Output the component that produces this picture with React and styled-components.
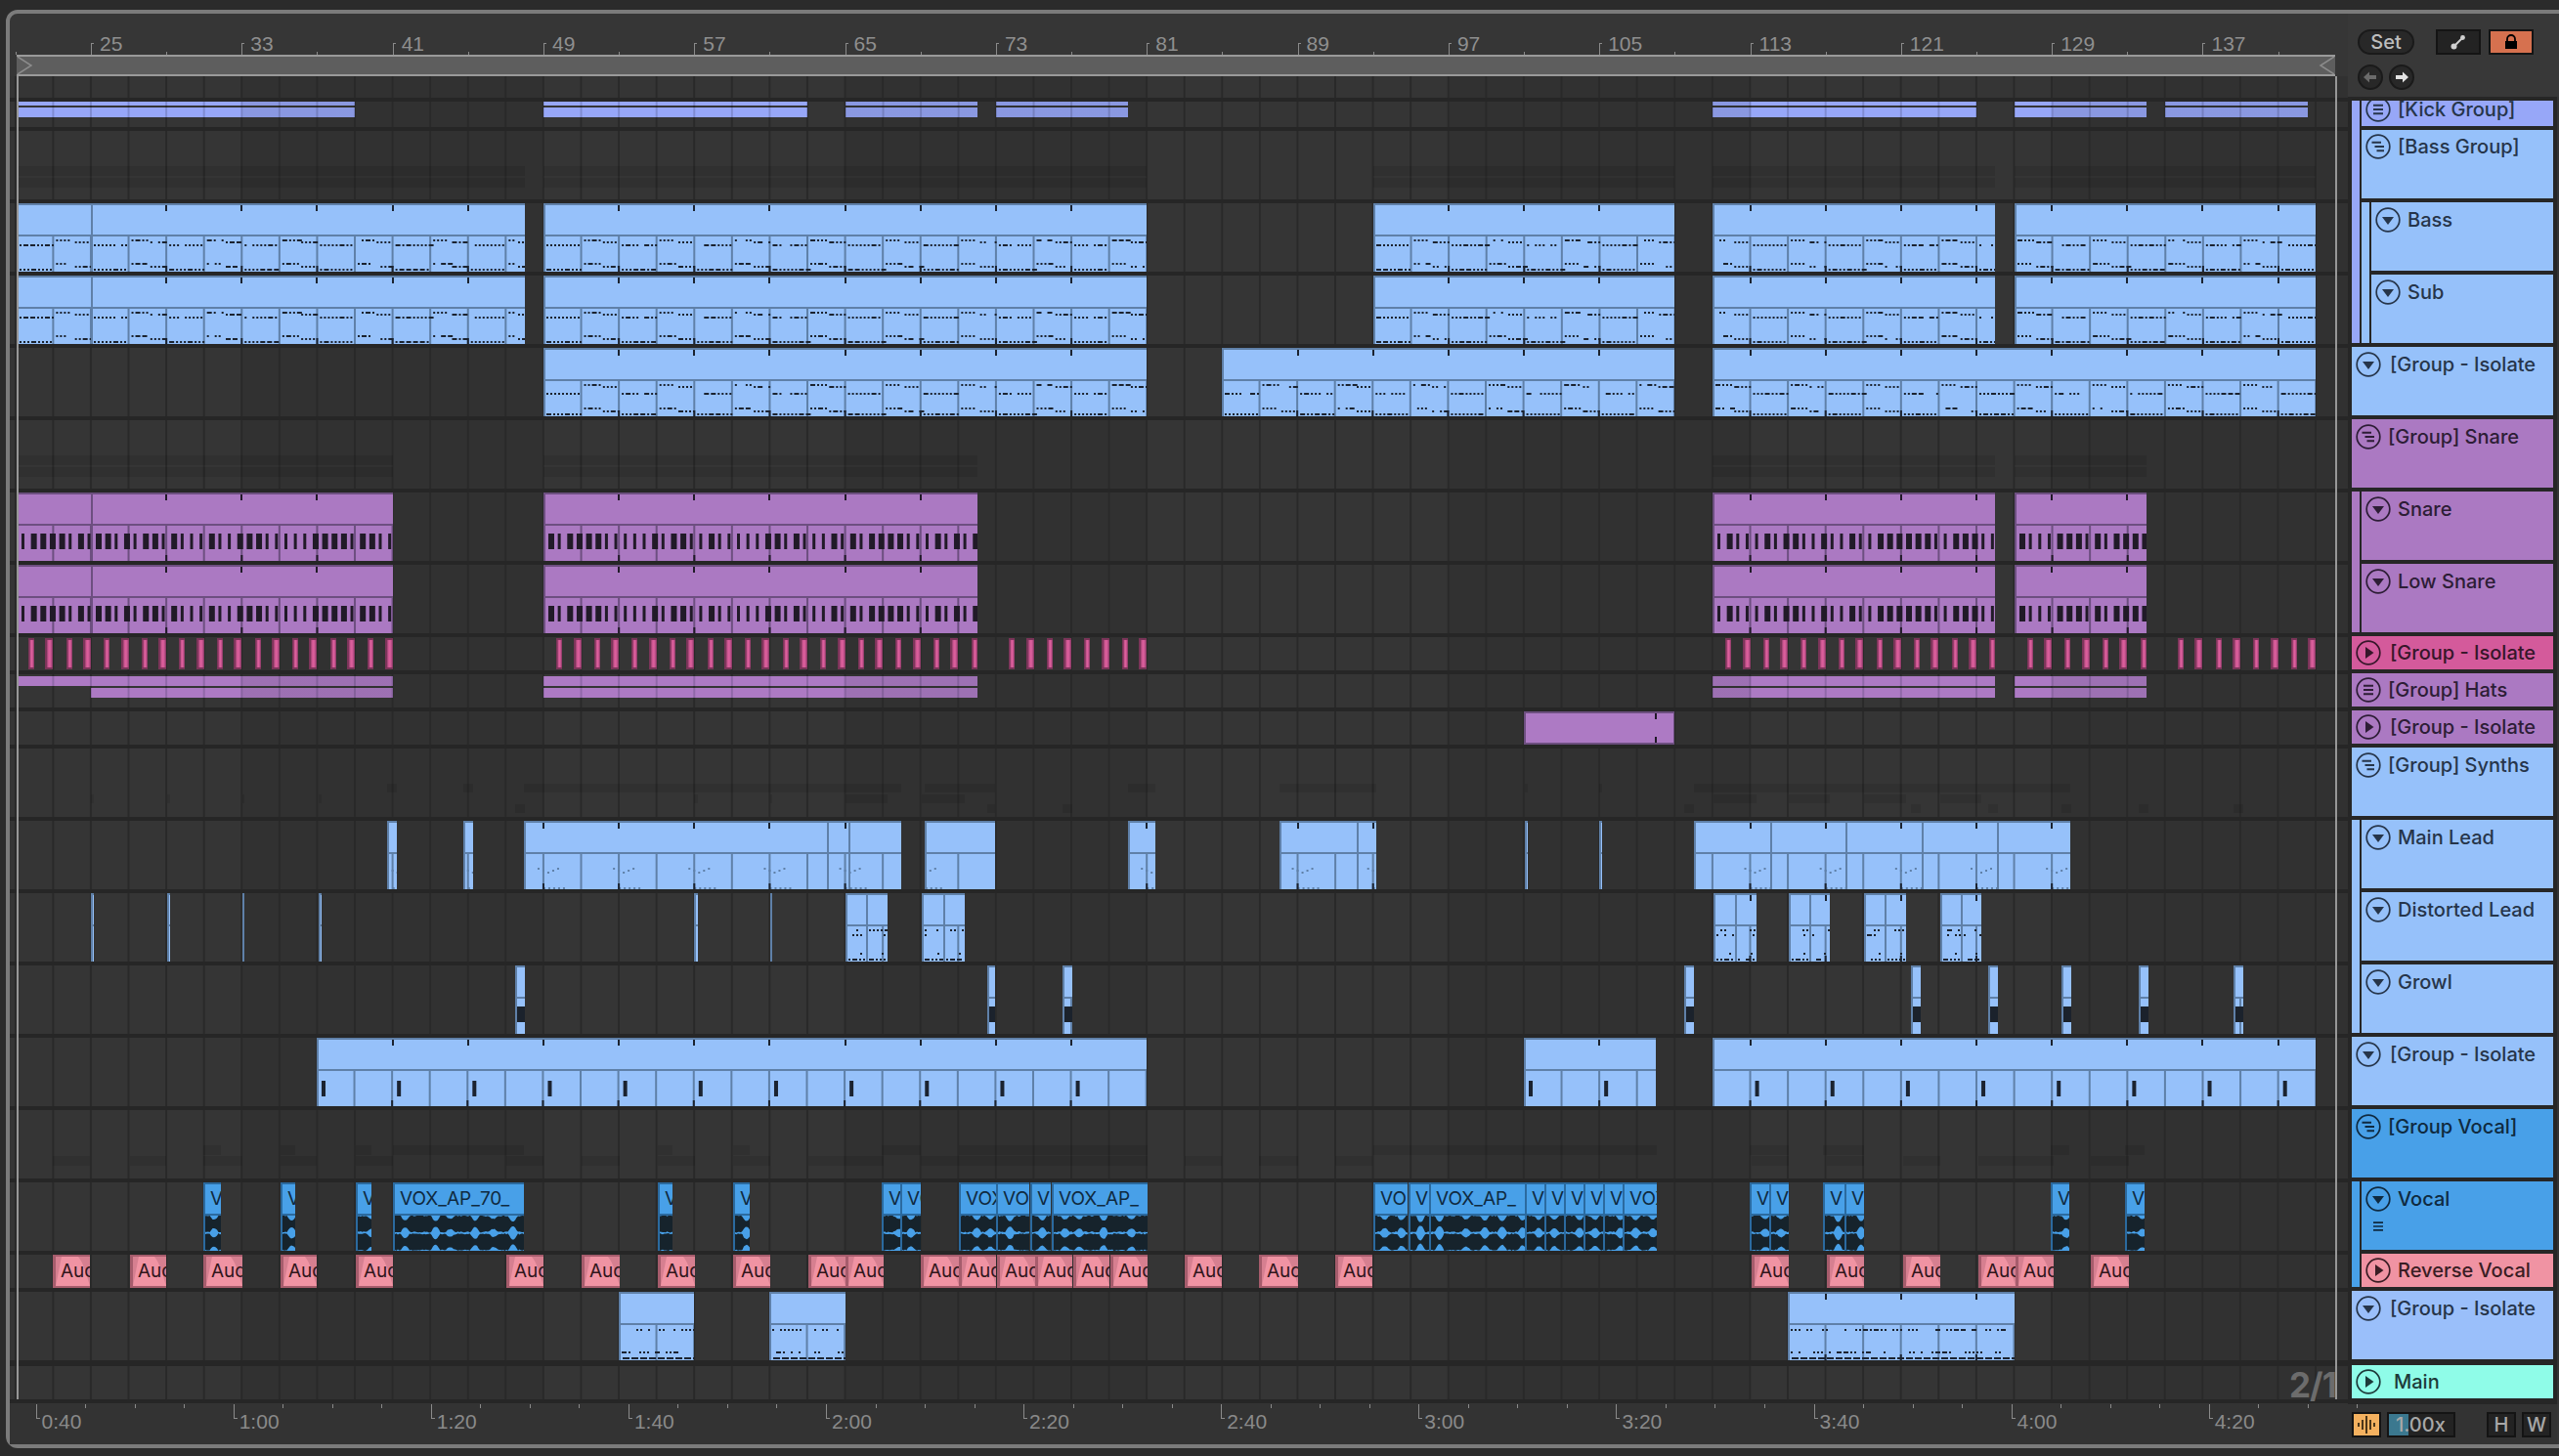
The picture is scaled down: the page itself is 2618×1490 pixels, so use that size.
import React from "react";
import styled, { createGlobalStyle } from "styled-components";

const LEFT = 10; // inner edge of the frame, all the x values below are page px
const b = (bar) => 93 + (bar - 25) * 19.29;
const GRID0 = 15.8;
const GRID = 38.58;
const BAND = 32 * 19.29; // darker 16 bars in every 32
const SANS = '"Inter", "Noto Sans", sans-serif';
const RULER = '"Liberation Sans", Arial, sans-serif';

const BLUE = { bg: "#96c1fa", line: "#5f80a8", note: "#1b2330", dim: "#5f80a8" };
const PURPLE = { bg: "#ab79c2", line: "#6d4f80", note: "#211a28", dim: "#6d4f80" };
const VOX = { bg: "#48a0e8", line: "#2b6a9f", note: "#16232c", dim: "#2b6a9f" };

const GlobalStyle = createGlobalStyle`
  html, body { margin: 0; padding: 0; width: 2618px; height: 1490px; overflow: hidden; background: #2b2b2b; }
`;

const rng = (seed) => {
  let s = Math.floor(seed * 7) + 11;
  return () => {
    s = (s * 9301 + 49297) % 233280;
    return s / 233280;
  };
};

const bassClips = [[17, b(25)], [b(25), b(48)], [b(49), b(81)], [b(93), b(109)], [b(111), b(126)], [b(127), b(143)]];
const isoBassClips = [[b(49), b(81)], [b(85), b(109)], [b(111), b(143)]];
const snareClips = [[17, b(25)], [b(25), b(41)], [b(49), b(72)], [b(111), b(126)], [b(127), b(134)]];
const leadClips = [[396, 406], [474, 484], [536, 846], [846, 868], [868, 922], [946, 1018], [1154, 1182], [1309, 1388], [1388, 1408], [1560, 1563], [1636, 1639], [1733, 1811], [1811, 1888], [1888, 1966], [1966, 2043], [2043, 2118]];
const distClips = [[93, 96], [171, 174], [248, 250], [326, 329], [710, 714], [788, 790], [865, 886], [886, 908], [943, 965], [965, 987], [1753, 1775], [1775, 1797], [1830, 1851], [1851, 1872], [1907, 1928], [1928, 1950], [1985, 2006], [2006, 2027]];
const growlClips = [[527, 537], [1010, 1018], [1087, 1097], [1723, 1733], [1955, 1965], [2034, 2044], [2109, 2119], [2188, 2198], [2285, 2295]];
const isoSynthClips = [[b(37), b(81)], [b(101), b(108)], [b(111), b(143)]];
const lowClips = [[b(53), b(57)], [b(61), b(65)], [b(115), b(127)]];

const voxClips = [
  [208, 226, "V"], [287, 302, "V"], [364, 380, "V"], [402, 536, "VOX_AP_70_"], [673, 688, "V"], [750, 767, "V"],
  [902, 921, "V"], [921, 942, "VO"], [981, 1019, "VOX"], [1019, 1053, "VO"], [1054, 1075, "V"], [1076, 1174, "VOX_AP_"],
  [1405, 1440, "VO"], [1441, 1462, "V"], [1462, 1560, "VOX_AP_"], [1560, 1580, "V"], [1580, 1600, "V"], [1600, 1620, "V"],
  [1620, 1640, "V"], [1640, 1660, "V"], [1660, 1695, "VOX"], [1790, 1810, "V"], [1810, 1830, "V"], [1865, 1887, "V"],
  [1887, 1907, "V"], [2098, 2117, "V"], [2174, 2194, "V"],
];
const revClips = [
  [54, 92], [133, 170], [208, 248], [287, 324], [364, 402], [518, 556], [595, 634], [673, 711], [750, 788], [827, 865],
  [865, 904], [942, 981], [981, 1019], [1020, 1059], [1059, 1097], [1098, 1135], [1136, 1174], [1212, 1250], [1288, 1328],
  [1366, 1404], [1792, 1830], [1869, 1907], [1947, 1985], [2024, 2062], [2062, 2101], [2139, 2178],
];

const pinkRanges = [[22, 41], [50, 72], [74, 81], [112, 126], [128, 134], [136, 143]];

const merge = (clips) => {
  const out = [];
  clips.forEach(([a, z]) => {
    const last = out[out.length - 1];
    if (last && a - last[1] < 3) last[1] = z;
    else out.push([a, z]);
  });
  return out;
};

const Frame = styled.div`
  position: absolute;
  top: 10px;
  left: 6px;
  width: 2620px;
  height: 1464px;
  display: flex;
  background: #363636;
  border: 4px solid #7b7b7b;
  border-radius: 12px 0 0 12px;
`;

const Arrangement = styled.div`
  width: 2392px;
  display: flex;
  flex-direction: column;
`;

const Ruler = styled.div`
  position: relative;
  height: 42px;
`;

const BarTick = styled.div.attrs((p) => ({ style: { left: p.$x - LEFT } }))`
  position: absolute;
  bottom: 0;
  width: 1px;
  height: ${(p) => (p.$major ? 12 : 3)}px;
  background: #8a8a8a;
  &::after {
    content: "";
    display: ${(p) => (p.$major ? "block" : "none")};
    width: 3px;
    height: 1px;
    background: #8a8a8a;
  }
`;

const BarLabel = styled.div.attrs((p) => ({ style: { left: p.$x - LEFT + 9 } }))`
  position: absolute;
  top: 19px;
  font: 21px/24px ${RULER};
  color: #8f8f8f;
`;

const LoopBar = styled.div`
  position: relative;
  height: 22px;
  box-sizing: border-box;
  margin: 0 13px 0 7px;
  background: #5e5e5e;
  border-top: 2px solid #9a9a9a;
  border-bottom: 2px solid #9a9a9a;
  display: flex;
  justify-content: space-between;
  svg { display: block; }
`;

const Lanes = styled.div`
  position: relative;
  display: flex;
  flex-direction: column;
  gap: 4px;
  height: 1358px;
  box-sizing: border-box;
  padding-bottom: 4px;
  background: #262626;
`;

const Lane = styled.div`
  position: relative;
  flex: 0 0 ${(p) => p.$h}px;
  margin-top: ${(p) => p.$mt || 0}px;
  overflow: hidden;
  background-color: #353535;
  background-image:
    linear-gradient(to right, #292929 2px, transparent 2px),
    linear-gradient(to right, rgba(0, 0, 0, 0.07) 50%, transparent 50%);
  background-size: ${GRID}px 100%, ${BAND}px 100%;
  background-position: ${GRID0 - LEFT - 1}px 0, ${b(33) - LEFT}px 0;
`;

const LoopEdge = styled.div.attrs((p) => ({ style: { left: p.$x - LEFT } }))`
  position: absolute;
  top: 0;
  bottom: 4px;
  width: 2px;
  background: #979797;
  z-index: 3;
`;

const Meter = styled.div`
  position: absolute;
  left: 2332px;
  top: 1319px;
  z-index: 2;
  font: 700 35px/40px ${SANS};
  letter-spacing: -1px;
  color: #6c6c6c;
`;

const ClipBox = styled.div.attrs((p) => ({ style: { left: p.$x - LEFT, width: p.$w } }))`
  position: absolute;
  top: 0;
  bottom: 0;
  box-sizing: border-box;
  display: flex;
  flex-direction: column;
  overflow: hidden;
  background: ${(p) => p.$c.bg};
  border-top: 2px solid ${(p) => p.$c.line};
  border-left: 2px solid ${(p) => p.$c.line};
`;

const ClipTitle = styled.div`
  position: relative;
  flex: 0 0 30px;
  box-sizing: content-box;
  overflow: hidden;
  border-bottom: 2px solid ${(p) => p.$c.line};
  font: 19px/30px ${SANS};
  color: #0f2a40;
  padding-left: 5px;
  white-space: nowrap;
`;

const TopTick = styled.i.attrs((p) => ({ style: { left: p.$x } }))`
  position: absolute;
  top: 0;
  width: 2px;
  height: 6px;
  background: ${(p) => p.$c.note};
`;

const ClipArt = styled.svg`
  display: block;
  flex: 0 0 36px;
`;

const gridInside = (x0, x1) => {
  const out = [];
  let k = Math.ceil((x0 + 1 - GRID0) / GRID);
  for (; GRID0 + k * GRID < x1; k++) out.push({ k, x: GRID0 + k * GRID - x0 });
  return out;
};

const fourBarTicks = (x0, x1) => {
  const out = [];
  for (let bar = 21; bar < 150; bar += 4) {
    const x = b(bar);
    if (x > x0 + 6 && x < x1 - 2) out.push(x - x0 - 3);
  }
  return out;
};

const dots = (r, x0, x1, y, color, thick = 2, keep = 0.9) => {
  const out = [];
  let x = x0 + 1;
  while (x < x1 - 3) {
    const w = r() > 0.8 ? 5 : 2;
    if (r() < keep) out.push(<rect key={`${x}-${y}`} x={x} y={y} width={w} height={thick} fill={color} />);
    x += w + 2;
  }
  return out;
};

const notesFor = (kind, x0, x1, c) => {
  const r = rng(x0 + x1);
  const w = x1 - x0;
  const cells = [{ k: Math.floor((x0 - GRID0) / GRID), x: 0 }, ...gridInside(x0, x1)];
  const out = [];
  if (kind === "bass" || kind === "iso") {
    cells.forEach(({ k, x }, i) => {
      const end = i + 1 < cells.length ? cells[i + 1].x : w;
      if (k % 2 === 0) {
        out.push(...dots(r, x, end, kind === "bass" ? 8 : 12, c.note));
        out.push(...dots(r, x, end, 33, c.note, 2, 1));
      } else {
        const mid = (x + end) / 2;
        out.push(...dots(r, x, mid, 3, c.note));
        out.push(...dots(r, mid, end, 5, c.note));
        out.push(...dots(r, x, mid, 27, c.note));
        out.push(...dots(r, mid, end, 30, c.note));
      }
    });
  }
  if (kind === "snare") {
    for (let x = 3; x < w - 1; x += 9.65) {
      const bw = r() > 0.5 ? 6 : 3;
      out.push(<rect key={x} x={x} y={8} width={Math.min(bw, w - x)} height={16} fill={c.note} />);
    }
  }
  if (kind === "lead") {
    for (let bar = 21; bar < 150; bar += 4) {
      const x = b(bar) - x0;
      if (x > -12 && x < w) {
        for (let i = 0; i < 5; i++) {
          const dx = x - 8 + i * 5;
          out.push(<rect key={`t${bar}-${i}`} x={dx} y={14 + (i < 3 ? i : 4 - i) * 2} width="2" height="2" fill={c.dim} />);
          out.push(<rect key={`u${bar}-${i}`} x={dx + 6} y={34} width="2" height="2" fill={c.dim} />);
        }
      }
    }
  }
  if (kind === "dist") {
    out.push(...dots(r, 0, w, 3, c.note, 2, 0.45));
    out.push(...dots(r, 0, w, 8, c.note, 2, 0.35));
    out.push(...dots(r, 0, w, 33, c.note, 2, 0.9));
    out.push(<rect key="n" x={w - 8} y={27} width="2" height="2" fill={c.note} />);
  }
  if (kind === "growl") {
    out.push(<rect key="g" x="0" y="8" width={w} height="16" fill="#1b222c" />);
  }
  if (kind === "isoSynth") {
    for (let bar = 21; bar < 150; bar += 4) {
      const x = b(bar) - x0 + 3;
      if (x > 0 && x < w) out.push(<rect key={bar} x={x} y={10} width="4" height="16" fill={c.note} />);
    }
  }
  if (kind === "low") {
    out.push(...dots(r, 0, w, 4, c.note, 2, 0.6));
    out.push(...dots(r, 0, w, 27, c.note, 2, 0.6));
    for (let x = 2; x < w - 2; x += 9) out.push(<rect key={`d${x}`} x={x} y={33} width="7" height="2" fill={c.note} />);
  }
  return out;
};

// the dips sit at uneven distances so the blobs don't look like a chain of beads
const waveDips = (w, seed) => {
  const r = rng(seed);
  const dips = [];
  let x = 8 + r() * 10;
  while (x < w) {
    dips.push({ x, depth: 0.35 + r() * 0.45 });
    x += 13 + r() * 24;
  }
  return dips;
};

const wavePath = (w, cy, dips, seed) => {
  const r = rng(seed);
  const top = [];
  const bottom = [];
  for (let x = 0; x <= w; x += 1.5) {
    let a = 7.6 + r() * 1.3;
    dips.forEach((d) => {
      const t = Math.abs(x - d.x) / 4.5;
      if (t < 1) a *= 1 - d.depth * (1 - t * t);
    });
    top.push(`${x},${(cy - a).toFixed(1)}`);
    bottom.unshift(`${x},${(cy + a).toFixed(1)}`);
  }
  return `M${top.join("L")}L${bottom.join("L")}Z`;
};

const Clip = ({ x0, x1, c, kind, h = 70 }) => {
  const w = x1 - x0;
  const ticks = fourBarTicks(x0, x1);
  return (
    <ClipBox $x={x0} $w={w} $c={c}>
      <ClipTitle $c={c}>
        {ticks.map((x) => <TopTick key={x} $x={x} $c={c} />)}
      </ClipTitle>
      <ClipArt width={w} height={h - 34}>
        {gridInside(x0, x1).map(({ x }) => <rect key={x} x={x - 3} y="0" width="2" height={h - 34} fill={c.line} />)}
        {notesFor(kind, x0, x1, c)}
        {ticks.map((x) => <rect key={x} x={x} y={h - 40} width="2" height="6" fill={c.note} />)}
      </ClipArt>
    </ClipBox>
  );
};

const VoxClip = ({ x0, x1, label }) => {
  const w = x1 - x0;
  const dips = waveDips(w, x0 + 5);
  return (
    <ClipBox $x={x0} $w={w} $c={VOX}>
      <ClipTitle $c={VOX}>{label}</ClipTitle>
      <ClipArt width={w} height="36">
        <path d={wavePath(w, 8.5, dips, x0 + 3)} fill={VOX.note} />
        <path d={wavePath(w, 27, dips, x0 + 9)} fill={VOX.note} />
      </ClipArt>
    </ClipBox>
  );
};

const RevBox = styled.div.attrs((p) => ({ style: { left: p.$x - LEFT, width: p.$w } }))`
  position: absolute;
  top: 0;
  bottom: 0;
  box-sizing: border-box;
  overflow: hidden;
  background: #f093a3;
  border: solid #a65c6c;
  border-width: 2px 0 2px 3px;
  font: 19px/30px ${SANS};
  color: #32161c;
  padding-left: 5px;
  white-space: nowrap;
  svg { position: absolute; left: 0; top: 0; }
  span { position: relative; }
`;

const RevClip = ({ x0, x1 }) => {
  const w = x1 - x0 - 3;
  return (
    <RevBox $x={x0} $w={x1 - x0}>
      <svg width={w} height="30">
        <path d={`M0 30L6 0H0Z M${w} 30C${w - 4} 16 ${w - 7} 6 ${w - 12} 0H${w}Z`} fill="#d67f90" />
      </svg>
      <span>Aud</span>
    </RevBox>
  );
};

const Ghost = styled.div.attrs((p) => ({ style: { left: p.$x - LEFT, width: p.$w } }))`
  position: absolute;
  top: ${(p) => p.$top}px;
  height: ${(p) => p.$h}px;
  background: rgba(0, 0, 0, 0.09);
`;

const Ghosts = ({ rows, h = 10, tops }) =>
  rows.map((clips, i) =>
    merge(clips).map(([a, z]) => <Ghost key={`${i}-${a}`} $x={a} $w={z - a} $top={tops[i]} $h={h} />),
  );

const Folded = styled.div.attrs((p) => ({ style: { left: p.$x - LEFT, width: p.$w } }))`
  position: absolute;
  top: ${(p) => p.$top}px;
  display: flex;
  flex-direction: column;
  gap: 2px;
`;

const FoldStrip = styled.div.attrs((p) => ({
  style: { backgroundPosition: `${p.$pos}px 0, ${p.$band}px 0`, marginLeft: p.$skip || 0 },
}))`
  height: ${(p) => p.$h}px;
  background-color: ${(p) => p.$bg};
  background-image:
    linear-gradient(to right, rgba(30, 30, 60, 0.2) 2px, transparent 2px),
    linear-gradient(to right, rgba(45, 45, 60, 0.12) 50%, transparent 50%);
  background-size: ${GRID}px 100%, ${BAND}px 100%;
`;

const FoldClip = ({ x0, x1, bg, top, h1, h2, skip = 0 }) => {
  const pos = (GRID0 - x0 - 1) % GRID;
  const band = b(33) - x0;
  return (
    <Folded $x={x0} $w={x1 - x0} $top={top}>
      <FoldStrip $h={h1} $bg={bg} $pos={pos} $band={band} />
      <FoldStrip $h={h2} $bg={bg} $pos={pos - skip} $band={band - skip} $skip={skip} />
    </Folded>
  );
};

const PinkBox = styled.div.attrs((p) => ({ style: { left: p.$x - LEFT, width: p.$w } }))`
  position: absolute;
  top: 1px;
  bottom: 1px;
  box-sizing: border-box;
  border-top: 2px solid #7b3459;
  border-bottom: 2px solid #7b3459;
  background: linear-gradient(to right, #7b3459 0 18%, #c9558f 40%, #e0619f 62%, #b54b84 84%, #7b3459 100%);
`;

const PlainClip = styled.div.attrs((p) => ({ style: { left: p.$x - LEFT, width: p.$w } }))`
  position: absolute;
  top: 0;
  bottom: 0;
  background: #ad7ac4;
  border: solid #6d4f80;
  border-width: 2px 1px 2px 2px;
  box-sizing: border-box;
  &::before,
  &::after {
    content: "";
    position: absolute;
    right: 17px;
    width: 2px;
    height: 6px;
    background: #211a28;
  }
  &::before { top: 0; }
  &::after { bottom: 0; }
`;

const FootRuler = styled.div`
  position: relative;
  height: 42px;
  background: #333333;
`;

const TimeTick = styled.div.attrs((p) => ({ style: { left: p.$x - LEFT } }))`
  position: absolute;
  top: 1px;
  width: 1px;
  height: ${(p) => (p.$major ? 15 : 4)}px;
  background: #8a8a8a;
  &::after {
    content: "";
    display: ${(p) => (p.$major ? "block" : "none")};
    position: absolute;
    bottom: 0;
    width: 4px;
    height: 1px;
    background: #8a8a8a;
  }
`;

const TimeLabel = styled.div.attrs((p) => ({ style: { left: p.$x - LEFT + 6 } }))`
  position: absolute;
  top: 7px;
  font: 21px/24px ${RULER};
  color: #8a8a8a;
`;

const Side = styled.div`
  width: 224px;
  display: flex;
  flex-direction: column;
`;

const Controls = styled.div`
  height: 86px;
  box-sizing: border-box;
  padding: 16px 0 0 10px;
  display: flex;
  flex-direction: column;
  gap: 10px;
  background: #383838;
`;

const ControlRow = styled.div`
  display: flex;
  align-items: center;
  gap: ${(p) => p.$gap}px;
`;

const SetButton = styled.div`
  width: 58px;
  height: 26px;
  box-sizing: border-box;
  border-radius: 13px;
  border: 2px solid #1a1a1a;
  background: #282828;
  color: #bdbdbd;
  font: 500 20px/22px ${SANS};
  text-align: center;
`;

const SquareButton = styled.div`
  width: ${(p) => p.$w || 46}px;
  height: 26px;
  margin-left: ${(p) => p.$ml || 0}px;
  box-sizing: border-box;
  border: 2px solid #141414;
  background: ${(p) => p.$bg || "#232323"};
  display: flex;
  align-items: center;
  justify-content: center;
`;

const RoundButton = styled.div`
  width: 26px;
  height: 26px;
  border-radius: 50%;
  box-sizing: border-box;
  border: 2px solid #1a1a1a;
  background: #282828;
  display: flex;
  align-items: center;
  justify-content: center;
`;

const Heads = styled.div`
  height: 1358px;
  box-sizing: border-box;
  padding: 4px 4px 4px 4px;
  width: 214px;
  display: flex;
  flex-direction: column;
  gap: 4px;
  background: #262626;
  box-shadow: 10px 0 0 #333333;
`;

const Head = styled.div`
  flex: 0 0 ${(p) => p.$h}px;
  box-sizing: border-box;
  overflow: hidden;
  margin-top: ${(p) => p.$mt || 0}px;
  padding: ${(p) => p.$pad ?? 5}px 0 0 4px;
  background: ${(p) => p.$bg};
  color: ${(p) => p.$fg};
  display: flex;
  flex-direction: column;
`;

const HeadTop = styled.div`
  display: flex;
  align-items: flex-start;
  gap: ${(p) => p.$gap}px;
  margin-top: ${(p) => p.$lift || 0}px;
`;

const HeadName = styled.div`
  font: 500 20px/24px ${SANS};
  padding-top: 1px;
  white-space: nowrap;
`;

const SmallLines = styled.svg`
  display: block;
  margin: 10px 0 0 8px;
`;

const TrackGroup = styled.div`
  display: flex;
  flex-direction: column;
  gap: 4px;
  padding-left: 10px;
  background: linear-gradient(to right, ${(p) => p.$bg} 8px, #262626 8px);
`;

const FootControls = styled.div`
  height: 42px;
  box-sizing: border-box;
  width: 214px;
  padding: 8px 2px 0 4px;
  display: flex;
  gap: 6px;
  background: #333333;
`;

const Tempo = styled.div`
  position: relative;
  width: 70px;
  height: 26px;
  box-sizing: border-box;
  border: 2px solid #141414;
  background: linear-gradient(to right, #3b788f 20px, #232323 20px);
  color: #a8a8a8;
  font: 500 20px/22px ${SANS};
  padding-left: 7px;
`;

const Key = styled(SquareButton)`
  color: #a8a8a8;
  font: 500 20px/22px ${SANS};
`;

const FoldIcon = ({ kind }) => (
  <svg width="26" height="26" viewBox="0 0 26 26" style={{ flex: "none", display: "block" }}>
    <circle cx="13" cy="13" r="11.8" fill="none" stroke="currentColor" strokeWidth="1.7" />
    {kind === "down" && <path d="M7 10H19L13 18Z" fill="currentColor" />}
    {kind === "right" && <path d="M10 7V19L18.5 13Z" fill="currentColor" />}
    {kind === "lines" && <path d="M8 8.7H18M8 13H18M8 17.3H18" stroke="currentColor" strokeWidth="1.9" />}
    {kind === "stagger" && <path d="M6.5 8.7H16M9.5 13H19M11.5 17.3H19" stroke="currentColor" strokeWidth="1.9" />}
  </svg>
);

const Track = ({ name, icon, h = 70, bg, fg = "#26354a", gap = 7, pad, mt, lift, children }) => (
  <Head $h={h} $bg={bg} $fg={fg} $pad={pad} $mt={mt}>
    <HeadTop $gap={gap} $lift={lift}>
      <FoldIcon kind={icon} />
      <HeadName>{name}</HeadName>
    </HeadTop>
    {children}
  </Head>
);

const barNumbers = [];
for (let n = 25; n <= 137; n += 8) barNumbers.push(n);
const minorBars = [21];
for (let n = 29; n <= 141; n += 8) minorBars.push(n);
const times = ["0:40", "1:00", "1:20", "1:40", "2:00", "2:20", "2:40", "3:00", "3:20", "3:40", "4:00", "4:20"];
const T0 = 36.6;
const TSTEP = 202.1;

const clipsOf = (clips, c, kind) => clips.map(([x0, x1]) => <Clip key={x0} x0={x0} x1={x1} c={c} kind={kind} />);

const pinks = [];
pinkRanges.forEach(([from, to]) => {
  for (let n = from; n <= to; n++) {
    const w = n % 2 ? 8 : 6;
    pinks.push([b(n) - w, w]);
  }
});

const KICK = "#97a7f8";

export default function App() {
  return (
    <>
      <GlobalStyle />
      <Frame>
        <Arrangement>
          <Ruler>
            {barNumbers.map((n) => (
              <React.Fragment key={n}>
                <BarTick $x={b(n)} $major />
                <BarLabel $x={b(n)}>{n}</BarLabel>
              </React.Fragment>
            ))}
            {minorBars.map((n) => <BarTick key={n} $x={b(n)} />)}
          </Ruler>
          <LoopBar>
            <svg width="18" height="18"><path d="M1 0L15 9L1 18" fill="none" stroke="#8c8c8c" strokeWidth="1.5" /></svg>
            <svg width="18" height="18"><path d="M17 0L3 9L17 18" fill="none" stroke="#8c8c8c" strokeWidth="1.5" /></svg>
          </LoopBar>
          <Lanes>
            <LoopEdge $x={16.5} />
            <LoopEdge $x={2388.5} />
            <Meter>2/1</Meter>
            <Lane $h={22} />
            <Lane $h={26}>
              <FoldClip x0={17} x1={b(39)} bg={KICK} top={0} h1={4} h2={10} />
              <FoldClip x0={b(49)} x1={b(63)} bg={KICK} top={0} h1={4} h2={10} />
              <FoldClip x0={b(65)} x1={b(72)} bg={KICK} top={0} h1={4} h2={10} />
              <FoldClip x0={b(73)} x1={b(80)} bg={KICK} top={0} h1={4} h2={10} />
              <FoldClip x0={b(111)} x1={b(125)} bg={KICK} top={0} h1={4} h2={10} />
              <FoldClip x0={b(127)} x1={b(134)} bg={KICK} top={0} h1={4} h2={10} />
              <FoldClip x0={b(135)} x1={2361} bg={KICK} top={0} h1={4} h2={10} />
            </Lane>
            <Lane $h={70}><Ghosts rows={[bassClips, bassClips]} tops={[36, 48]} /></Lane>
            <Lane $h={70}>{clipsOf(bassClips, BLUE, "bass")}</Lane>
            <Lane $h={70}>{clipsOf(bassClips, BLUE, "bass")}</Lane>
            <Lane $h={70}>{clipsOf(isoBassClips, BLUE, "iso")}</Lane>
            <Lane $h={70}><Ghosts rows={[snareClips, snareClips]} tops={[36, 48]} /></Lane>
            <Lane $h={70}>{clipsOf(snareClips, PURPLE, "snare")}</Lane>
            <Lane $h={70}>{clipsOf(snareClips, PURPLE, "snare")}</Lane>
            <Lane $h={34}>
              {pinks.map(([x, w]) => <PinkBox key={x} $x={x} $w={w} />)}
            </Lane>
            <Lane $h={34}>
              <FoldClip x0={17} x1={b(41)} bg="#ad7ac4" top={2} h1={10} h2={10} skip={b(25) - 17} />
              <FoldClip x0={b(49)} x1={b(72)} bg="#ad7ac4" top={2} h1={10} h2={10} />
              <FoldClip x0={b(111)} x1={b(126)} bg="#ad7ac4" top={2} h1={10} h2={10} />
              <FoldClip x0={b(127)} x1={b(134)} bg="#ad7ac4" top={2} h1={10} h2={10} />
            </Lane>
            <Lane $h={34}><PlainClip $x={b(101)} $w={b(109) - b(101)} /></Lane>
            <Lane $h={70}><Ghosts rows={[leadClips, distClips, growlClips]} tops={[36, 47, 57]} h={9} /></Lane>
            <Lane $h={70}>{clipsOf(leadClips, BLUE, "lead")}</Lane>
            <Lane $h={70}>{clipsOf(distClips, BLUE, "dist")}</Lane>
            <Lane $h={70}>{clipsOf(growlClips, BLUE, "growl")}</Lane>
            <Lane $h={70}>{clipsOf(isoSynthClips, BLUE, "isoSynth")}</Lane>
            <Lane $h={70}><Ghosts rows={[voxClips, revClips]} tops={[36, 47]} /></Lane>
            <Lane $h={70}>{voxClips.map(([x0, x1, t]) => <VoxClip key={x0} x0={x0} x1={x1} label={t} />)}</Lane>
            <Lane $h={34}>{revClips.map(([x0, x1]) => <RevClip key={x0} x0={x0} x1={x1} />)}</Lane>
            <Lane $h={70}>{clipsOf(lowClips, BLUE, "low")}</Lane>
            <Lane $h={34} $mt={2} />
          </Lanes>
          <FootRuler>
            {times.map((t, i) => (
              <React.Fragment key={t}>
                <TimeTick $x={T0 + i * TSTEP} $major />
                <TimeLabel $x={T0 + i * TSTEP}>{t}</TimeLabel>
                {[1, 2, 3].map((q) => <TimeTick key={q} $x={T0 + i * TSTEP + (q * TSTEP) / 4} />)}
              </React.Fragment>
            ))}
          </FootRuler>
        </Arrangement>
        <Side>
          <Controls>
            <ControlRow $gap={0}>
              <SetButton>Set</SetButton>
              <SquareButton $ml={22}>
                <svg width="16" height="16" viewBox="0 0 16 16"><path d="M3 13L13 3" stroke="#d0d0d0" strokeWidth="2" /><circle cx="3.5" cy="12.5" r="3" fill="#d0d0d0" /><circle cx="12.5" cy="3.5" r="2.4" fill="#d0d0d0" /></svg>
              </SquareButton>
              <SquareButton $ml={8} $bg="#d6714f">
                <svg width="16" height="16" viewBox="0 0 16 16"><path d="M4 7V5a4 4 0 0 1 8 0v2" fill="none" stroke="#000" strokeWidth="1.8" /><rect x="2" y="7" width="12" height="8" fill="#000" /></svg>
              </SquareButton>
            </ControlRow>
            <ControlRow $gap={6}>
              <RoundButton>
                <svg width="16" height="14" viewBox="0 0 16 14"><path d="M1 7L7 1.5V5H14V9H7V12.5Z" fill="#6b6b6b" /></svg>
              </RoundButton>
              <RoundButton>
                <svg width="16" height="14" viewBox="0 0 16 14"><path d="M15 7L9 1.5V5H2V9H9V12.5Z" fill="#e2e2e2" /></svg>
              </RoundButton>
            </ControlRow>
          </Controls>
          <Heads>
            <TrackGroup $bg={KICK}>
              <Track name="[Kick Group]" icon="lines" h={26} pad={0} lift={-4} bg={KICK} />
              <Track name="[Bass Group]" icon="stagger" bg="#96c1fa" pad={4} />
              <TrackGroup $bg="#96c1fa">
                <Track name="Bass" icon="down" bg="#96c1fa" />
                <Track name="Sub" icon="down" bg="#96c1fa" />
              </TrackGroup>
            </TrackGroup>
            <Track name="[Group - Isolate" icon="down" bg="#96c1fa" gap={9} />
            <Track name="[Group] Snare" icon="stagger" bg="#ab79c2" fg="#2d1d36" />
            <TrackGroup $bg="#ab79c2">
              <Track name="Snare" icon="down" bg="#ab79c2" fg="#2d1d36" />
              <Track name="Low Snare" icon="down" bg="#ab79c2" fg="#2d1d36" />
            </TrackGroup>
            <Track name="[Group - Isolate" icon="right" h={34} pad={4} bg="#d45a9b" fg="#36162a" gap={9} />
            <Track name="[Group] Hats" icon="lines" h={34} pad={4} bg="#ab79c2" fg="#2d1d36" />
            <Track name="[Group - Isolate" icon="right" h={34} pad={4} bg="#ab79c2" fg="#2d1d36" gap={9} />
            <Track name="[Group] Synths" icon="stagger" bg="#96c1fa" />
            <TrackGroup $bg="#96c1fa">
              <Track name="Main Lead" icon="down" bg="#96c1fa" />
              <Track name="Distorted Lead" icon="down" bg="#96c1fa" />
              <Track name="Growl" icon="down" bg="#96c1fa" />
            </TrackGroup>
            <Track name="[Group - Isolate" icon="down" bg="#96c1fa" gap={9} />
            <Track name="[Group Vocal]" icon="stagger" bg="#48a0e8" fg="#0f2a40" />
            <TrackGroup $bg="#48a0e8">
              <Track name="Vocal" icon="down" bg="#48a0e8" fg="#0f2a40">
                <SmallLines width="10" height="10" viewBox="0 0 10 10"><path d="M0 1.2H10M0 5H10M0 8.8H10" stroke="#0f2a40" strokeWidth="1.7" /></SmallLines>
              </Track>
              <Track name="Reverse Vocal" icon="right" h={34} pad={4} bg="#f093a3" fg="#3a1d24" />
            </TrackGroup>
            <Track name="[Group - Isolate" icon="down" bg="#9abffa" gap={9} />
            <Track name="Main" icon="right" h={34} pad={4} mt={2} bg="#8ffce8" fg="#1d3a3a" gap={13} />
          </Heads>
          <FootControls>
            <SquareButton $w={30} $bg="#f4b15f">
              <svg width="20" height="18" viewBox="0 0 20 18"><path d="M2 7V11M6 4V14M10 0V18M14 4V14M18 7V11" stroke="#3a2a12" strokeWidth="1.8" /></svg>
            </SquareButton>
            <Tempo>1.00x</Tempo>
            <Key $w={30} $ml={26}>H</Key>
            <Key $w={30}>W</Key>
          </FootControls>
        </Side>
      </Frame>
    </>
  );
}
